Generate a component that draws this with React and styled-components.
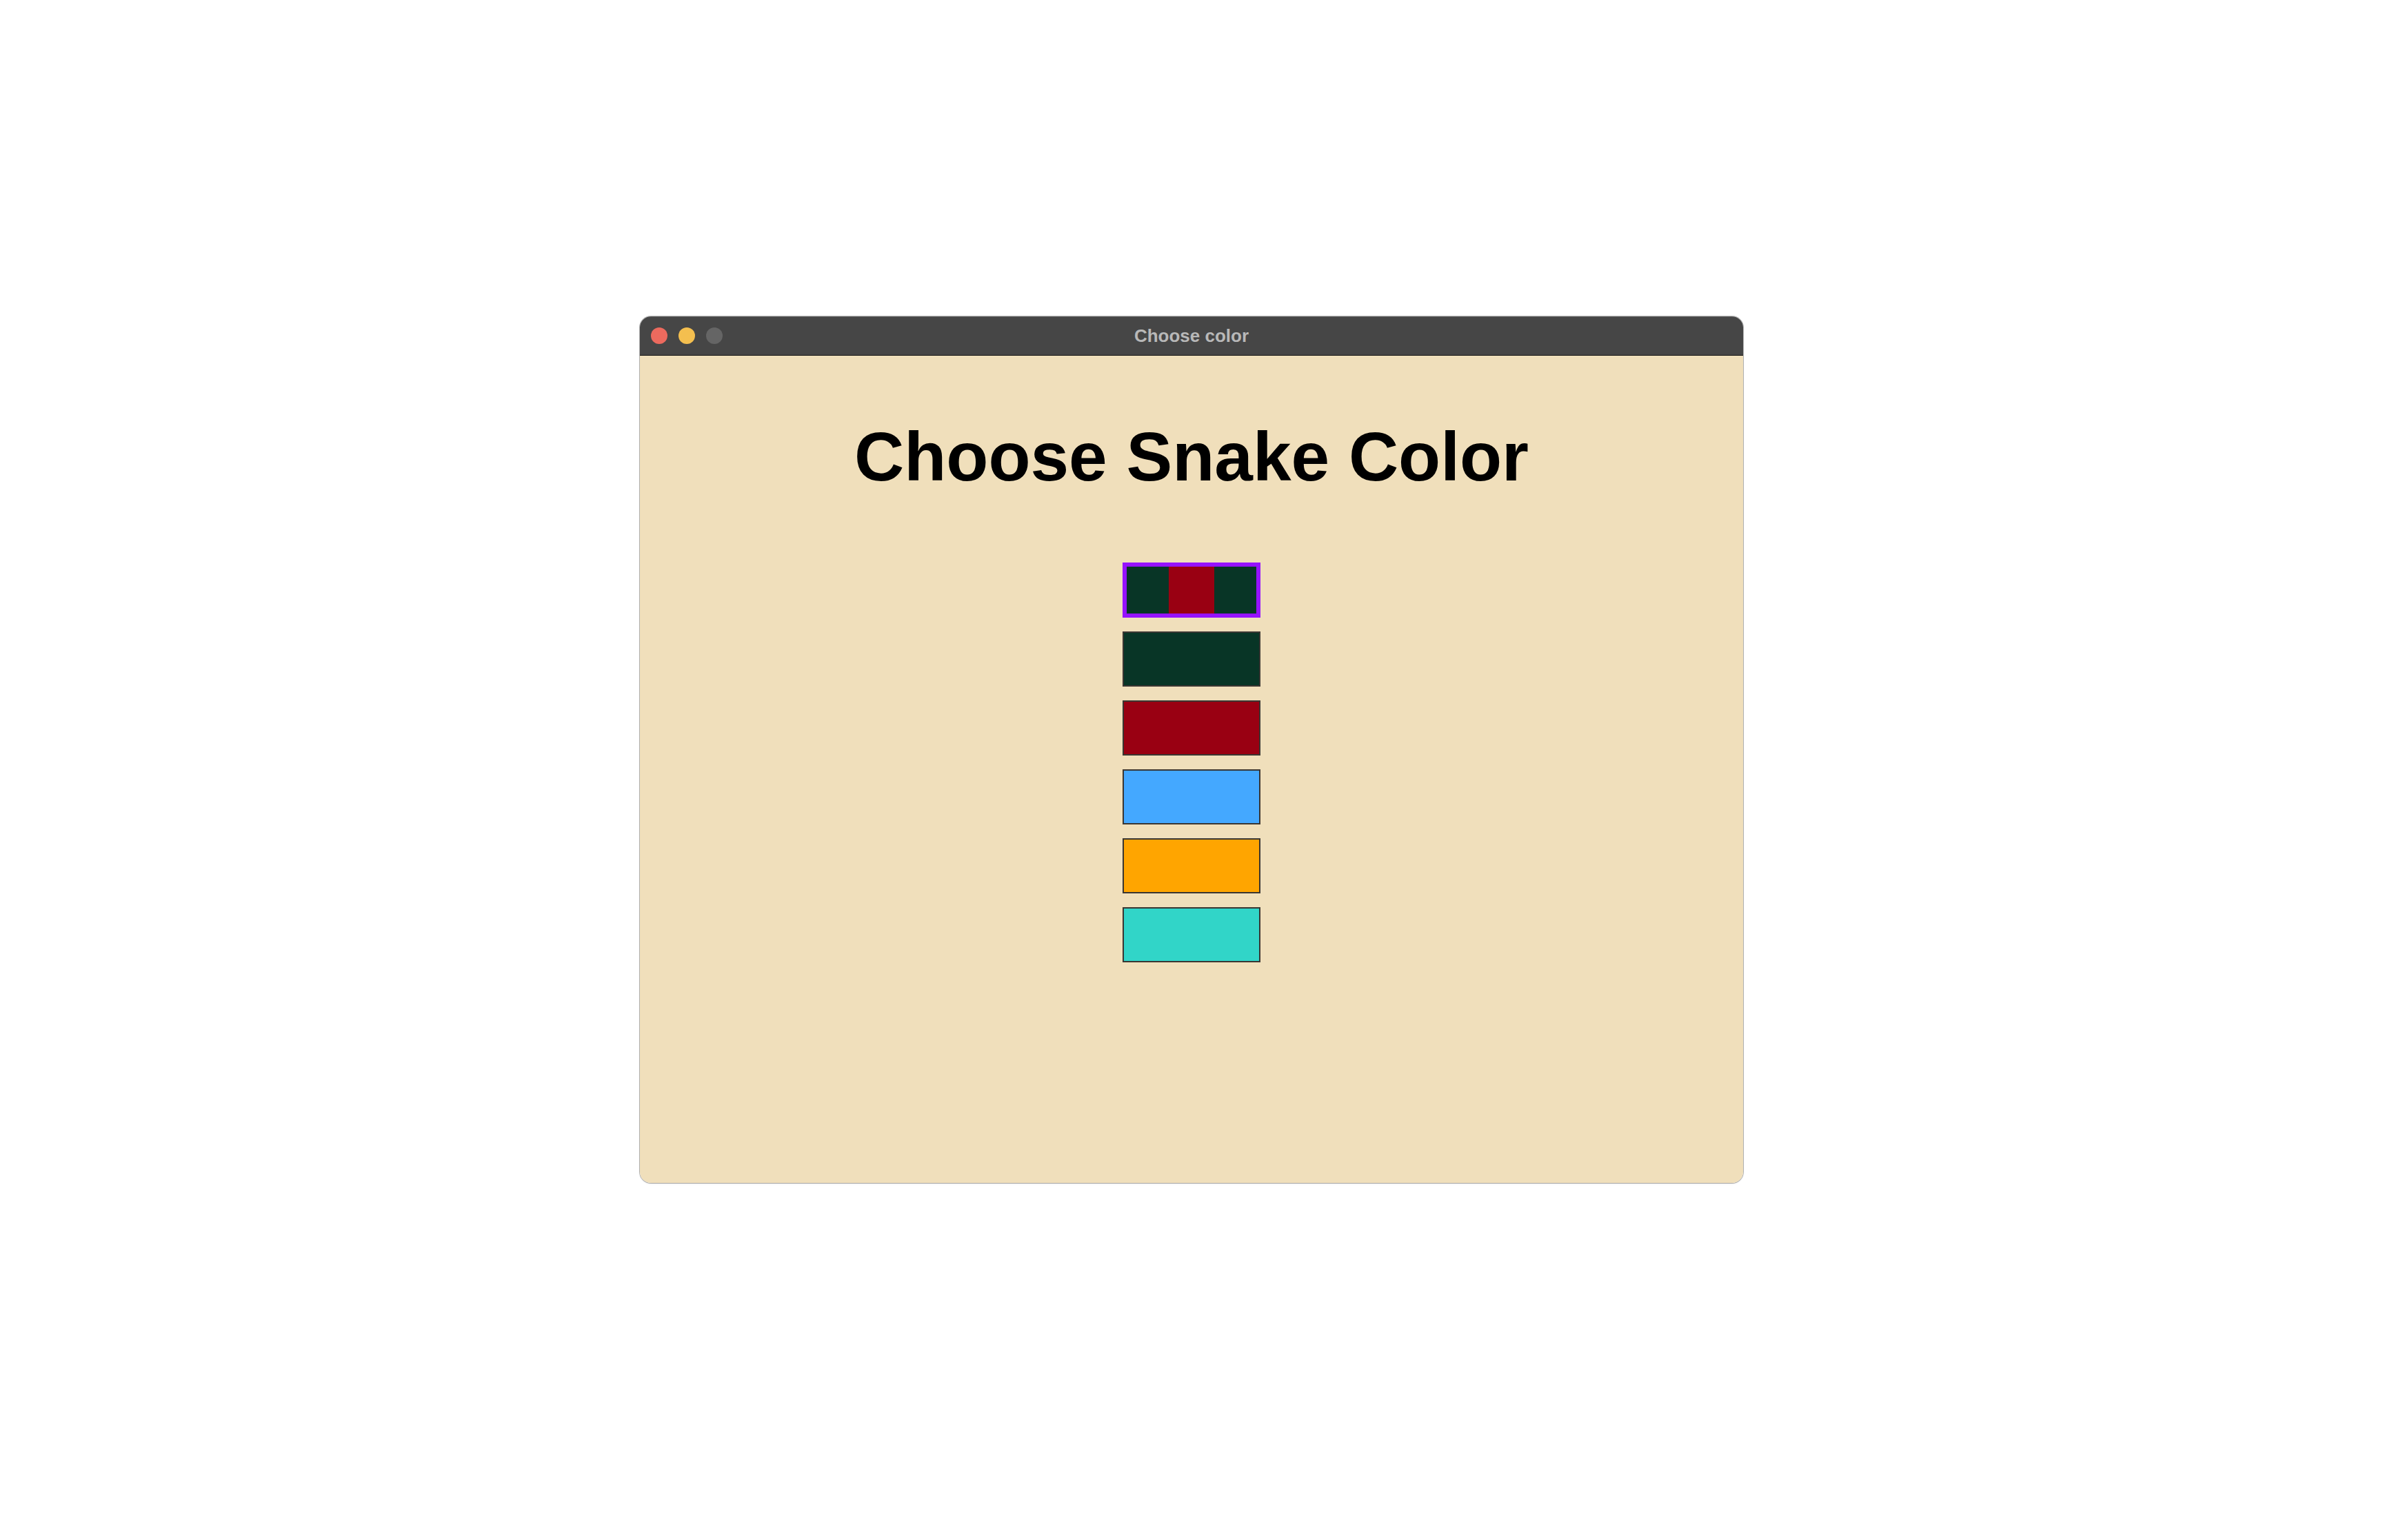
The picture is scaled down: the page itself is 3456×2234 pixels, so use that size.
import React from "react";
import styled, { createGlobalStyle } from "styled-components";

const Global = createGlobalStyle`
  html, body { margin: 0; padding: 0; background: #ffffff; }
  body { font-family: "Liberation Sans", Arial, sans-serif; }
`;

const Page = styled.div`
  display: flex;
  justify-content: center;
  align-items: flex-start;
  padding-top: 459px;
  min-height: 2234px;
  box-sizing: border-box;
`;

const Window = styled.div`
  width: 1600px;
  display: flex;
  flex-direction: column;
  border-radius: 16px;
  box-shadow: 0 0 0 1px rgba(0, 0, 0, 0.28), 0 1px 3px rgba(0, 0, 0, 0.12);
  overflow: hidden;
`;

const TitleBar = styled.div`
  position: relative;
  height: 56px;
  background: #464646;
  border-bottom: 1px solid #141414;
  box-shadow: inset 0 1px 0 rgba(255, 255, 255, 0.12);
  display: flex;
  align-items: center;
  justify-content: center;
`;

const Lights = styled.div`
  position: absolute;
  left: 16px;
  top: 0;
  bottom: 0;
  display: flex;
  align-items: center;
  gap: 16px;
`;

const Light = styled.span`
  width: 24px;
  height: 24px;
  border-radius: 50%;
  background: ${(p) => p.$color};
`;

const WindowTitle = styled.div`
  font-family: "Liberation Sans", Arial, sans-serif;
  font-weight: 700;
  font-size: 26px;
  line-height: 26px;
  color: #b8b8b8;
`;

const Content = styled.div`
  height: 1200px;
  background: #f0dfbb;
  display: flex;
  flex-direction: column;
  align-items: center;
  padding-top: 96px;
  box-sizing: border-box;
`;

const Heading = styled.h1`
  margin: 0;
  font-family: "Liberation Sans", Arial, sans-serif;
  font-weight: 700;
  font-size: 100px;
  line-height: 100px;
  color: #000000;
`;

const Swatches = styled.div`
  margin-top: 104px;
  display: flex;
  flex-direction: column;
  gap: 20px;
`;

const Swatch = styled.button`
  display: block;
  width: 200px;
  height: 80px;
  padding: 0;
  margin: 0;
  box-sizing: border-box;
  cursor: pointer;
  border: ${(p) => (p.$selected ? "6px solid #9612ff" : "2px solid #3a3632")};
  background: ${(p) => p.$fill};
  background-origin: border-box;
  background-clip: border-box;
`;

const GREEN = "#083526";
const RED = "#990012";

const swatches = [
  {
    id: "gucci",
    fill: `linear-gradient(to right, ${GREEN} 0 33.333%, ${RED} 33.333% 66.667%, ${GREEN} 66.667% 100%)`,
  },
  { id: "green", fill: GREEN },
  { id: "red", fill: RED },
  { id: "blue", fill: "#44a8ff" },
  { id: "orange", fill: "#ffa500" },
  { id: "teal", fill: "#31d5c8" },
];

export default function App() {
  const [selected, setSelected] = React.useState("gucci");
  return (
    <>
      <Global />
      <Page>
        <Window>
          <TitleBar>
            <Lights>
              <Light $color="#ec6a5e" />
              <Light $color="#f4bf4f" />
              <Light $color="#656565" />
            </Lights>
            <WindowTitle>Choose color</WindowTitle>
          </TitleBar>
          <Content>
            <Heading>Choose Snake Color</Heading>
            <Swatches>
              {swatches.map((s) => (
                <Swatch
                  key={s.id}
                  aria-label={s.id}
                  $fill={s.fill}
                  $selected={selected === s.id}
                  onClick={() => setSelected(s.id)}
                />
              ))}
            </Swatches>
          </Content>
        </Window>
      </Page>
    </>
  );
}
